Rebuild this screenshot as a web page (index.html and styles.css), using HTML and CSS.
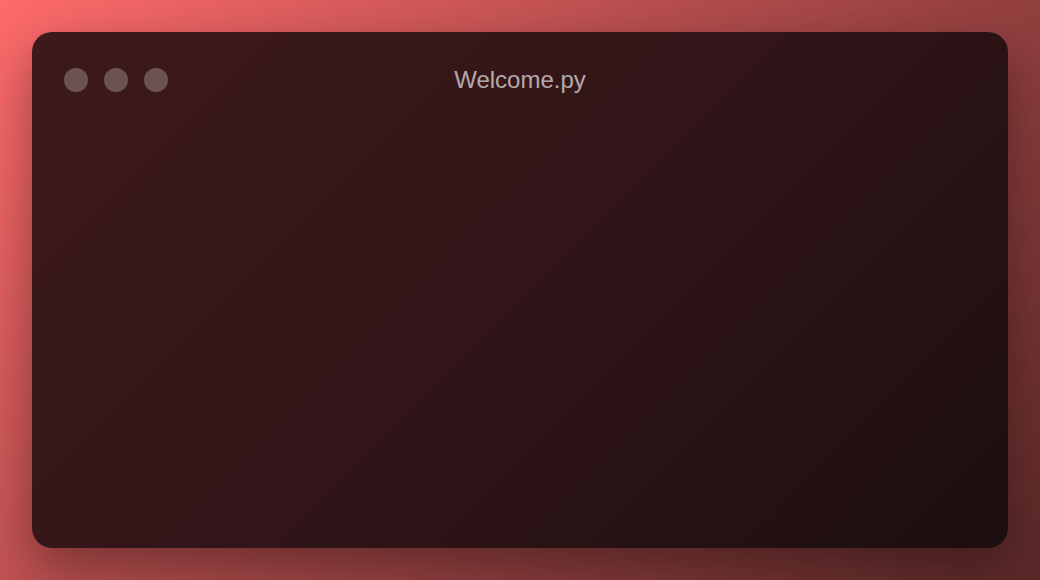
FILE: index.html
```html
<!DOCTYPE html>
<html>
<head>
<meta charset="utf-8">
<link rel="stylesheet" href="styles.css">
</head>
<body>
<div class="window">
  <div class="titlebar">
    <div class="dots"><span class="dot"></span><span class="dot"></span><span class="dot"></span></div>
    <div class="title">Welcome.py</div>
  </div>
</div>
</body>
</html>
```
FILE: styles.css
```css
html, body { margin: 0; height: 100%; }
body {
  box-sizing: border-box;
  padding: 32px;
  background: linear-gradient(135deg, #ff6b6b 0%, #a84848 50%, #5a2828 100%);
  font-family: "Liberation Sans", Arial, sans-serif;
  display: flex;
}
.window {
  flex: 1;
  border-radius: 20px;
  background: linear-gradient(135deg, #3e1a1a 0%, #311518 50%, #1c0e0e 100%);
  box-shadow: 0 20px 50px rgba(0,0,0,0.35);
  padding: 32px;
}
.titlebar {
  position: relative;
  height: 32px;
  display: flex;
  align-items: center;
}
.dots { display: flex; gap: 16px; }
.dot {
  width: 24px; height: 24px; border-radius: 50%;
  background: rgba(255,255,255,0.25);
}
.title {
  position: absolute;
  left: 0; right: 0; top: 0; bottom: 0;
  display: flex; align-items: center; justify-content: center;
  font-size: 24px;
  color: rgba(255,255,255,0.65);
}
```
